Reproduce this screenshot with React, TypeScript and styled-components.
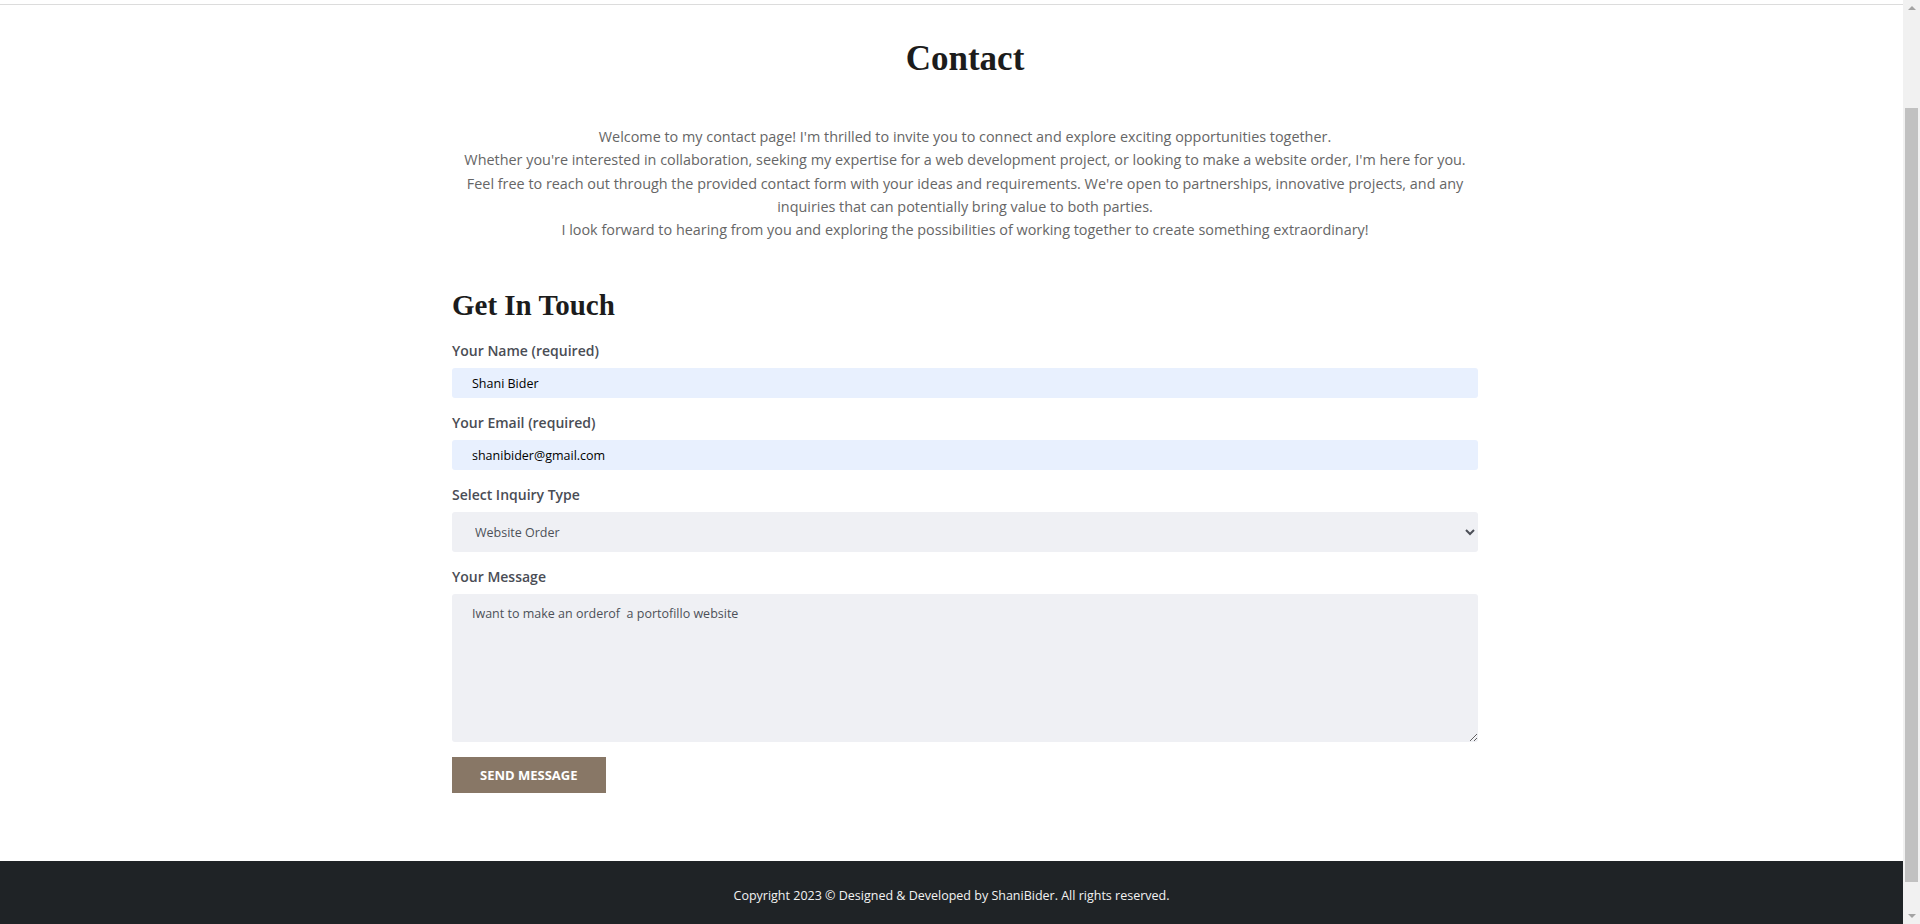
import React, { useLayoutEffect, useRef, useState } from 'react';
import styled, { createGlobalStyle } from 'styled-components';

const GlobalStyle = createGlobalStyle`
  html {
    overflow-y: scroll;
  }

  body {
    margin: 0;
    background: #fff;
    font-family: 'Open Sans', 'Liberation Sans', sans-serif;
    color: #212529;
  }

  * {
    box-sizing: border-box;
  }
`;

const INTRO_LINES = [
  "Welcome to my contact page! I'm thrilled to invite you to connect and explore exciting opportunities together.",
  "Whether you're interested in collaboration, seeking my expertise for a web development project, or looking to make a website order, I'm here for you.",
  "Feel free to reach out through the provided contact form with your ideas and requirements. We're open to partnerships, innovative projects, and any inquiries that can potentially bring value to both parties.",
  'I look forward to hearing from you and exploring the possibilities of working together to create something extraordinary!',
];

const INQUIRY_TYPES = ['Website Order', 'Collaboration', 'Partnership', 'Other'];

const App: React.FC = () => {
  const navRef = useRef<HTMLElement>(null);
  const [name, setName] = useState('Shani Bider');
  const [email, setEmail] = useState('shanibider@gmail.com');
  const [inquiry, setInquiry] = useState('Website Order');
  const [message, setMessage] = useState('Iwant to make an orderof  a portofillo website');

  // the page is seen scrolled a little past the top bar
  useLayoutEffect(() => {
    if (navRef.current) {
      window.scrollTo(0, navRef.current.offsetHeight - 5);
    }
  }, []);

  return (
    <>
      <GlobalStyle />
      <Page>
        <NavBar ref={navRef} />
        <Main>
          <Title>Contact</Title>
          <Intro>
            {INTRO_LINES.map((line) => (
              <span key={line}>
                {line}
                <br />
              </span>
            ))}
          </Intro>

          <SubTitle>Get In Touch</SubTitle>
          <Form onSubmit={(e) => e.preventDefault()}>
            <Field>
              <Label htmlFor="name">Your Name (required)</Label>
              <TextInput id="name" value={name} onChange={(e) => setName(e.target.value)} />
            </Field>
            <Field>
              <Label htmlFor="email">Your Email (required)</Label>
              <TextInput
                id="email"
                type="email"
                value={email}
                onChange={(e) => setEmail(e.target.value)}
              />
            </Field>
            <Field>
              <Label htmlFor="inquiry">Select Inquiry Type</Label>
              <Select id="inquiry" value={inquiry} onChange={(e) => setInquiry(e.target.value)}>
                {INQUIRY_TYPES.map((t) => (
                  <option key={t} value={t}>
                    {t}
                  </option>
                ))}
              </Select>
            </Field>
            <Field>
              <Label htmlFor="message">Your Message</Label>
              <MessageArea
                id="message"
                value={message}
                onChange={(e) => setMessage(e.target.value)}
              />
            </Field>
            <SendButton type="submit">Send Message</SendButton>
          </Form>
        </Main>
        <Footer>
          Copyright 2023 © Designed &amp; Developed by ShaniBider. All rights reserved.
        </Footer>
      </Page>

      <ScrollTrack>
        <ArrowUp />
        <Thumb />
        <ArrowDown />
      </ScrollTrack>
    </>
  );
};

export default App;

const Page = styled.div`
  width: calc(100% - 17px);
`;

const NavBar = styled.header`
  height: 100px;
  background: #fff;
  border-bottom: 1px solid #dcdcdc;
`;

const Main = styled.main`
  width: 1053px;
  margin: 0 auto;
  padding: 33px 0 68px 27px;
`;

const Title = styled.h1`
  margin: 0;
  font-family: 'Liberation Serif', 'Times New Roman', serif;
  font-size: 35px;
  line-height: 42px;
  font-weight: 700;
  text-align: center;
  color: #1c1c1c;
`;

const Intro = styled.p`
  margin: 45px 0 0;
  font-size: 14.4px;
  line-height: 23.25px;
  text-align: center;
  color: #666;
`;

const SubTitle = styled.h2`
  margin: 47px 0 0;
  font-family: 'Liberation Serif', 'Times New Roman', serif;
  font-size: 29px;
  line-height: 34px;
  font-weight: 700;
  color: #1c1c1c;
`;

const Form = styled.form`
  display: flex;
  flex-direction: column;
  align-items: flex-start;
  gap: 15px;
  margin-top: 19px;
`;

const Field = styled.div`
  display: flex;
  flex-direction: column;
  gap: 7px;
  width: 100%;
`;

const Label = styled.label`
  font-size: 14px;
  line-height: 20px;
  font-weight: 600;
  color: #4a4d55;
`;

const TextInput = styled.input`
  height: 30px;
  padding: 0 20px;
  border: none;
  border-radius: 3px;
  background: #e8f0fe;
  font-family: 'Open Sans', 'Liberation Sans', sans-serif;
  font-size: 12.5px;
  color: #000;
  outline: none;
`;

const Select = styled.select`
  height: 40px;
  padding: 0 16px 0 19px;
  border: none;
  border-radius: 3px;
  background-color: #eff0f4;
  font-family: 'Open Sans', 'Liberation Sans', sans-serif;
  font-size: 12.5px;
  color: #4d5058;
  outline: none;
`;

const MessageArea = styled.textarea`
  height: 148px;
  padding: 10px 20px;
  border: none;
  border-radius: 3px;
  background: #eff0f4;
  font-family: 'Open Sans', 'Liberation Sans', sans-serif;
  font-size: 12.5px;
  line-height: 20px;
  color: #4d5058;
  resize: vertical;
  outline: none;
`;

const SendButton = styled.button`
  height: 36px;
  padding: 0 28px;
  border: none;
  background: #887766;
  font-family: 'Open Sans', 'Liberation Sans', sans-serif;
  font-size: 13px;
  font-weight: 700;
  text-transform: uppercase;
  color: #fff;
  cursor: pointer;
`;

const Footer = styled.footer`
  padding: 26px 0 60px;
  background: #1f2326;
  font-size: 12.5px;
  line-height: 18px;
  text-align: center;
  color: #f2f2f2;
`;

/* the browser's scrollbar, drawn since the headless window hides the real one */
const ScrollTrack = styled.div`
  position: fixed;
  top: 0;
  right: 0;
  width: 17px;
  height: 100vh;
  background: #f1f1f1;
  display: flex;
  flex-direction: column;
  align-items: center;
`;

const ArrowUp = styled.span`
  margin-top: 6px;
  width: 0;
  height: 0;
  border-left: 4px solid transparent;
  border-right: 4px solid transparent;
  border-bottom: 4px solid #a3a3a3;
`;

const ArrowDown = styled(ArrowUp)`
  margin-top: auto;
  margin-bottom: 6px;
  border-bottom: none;
  border-top: 4px solid #a3a3a3;
`;

const Thumb = styled.div`
  margin-top: 98px;
  width: 13px;
  height: 774px;
  background: #c1c1c1;
`;
